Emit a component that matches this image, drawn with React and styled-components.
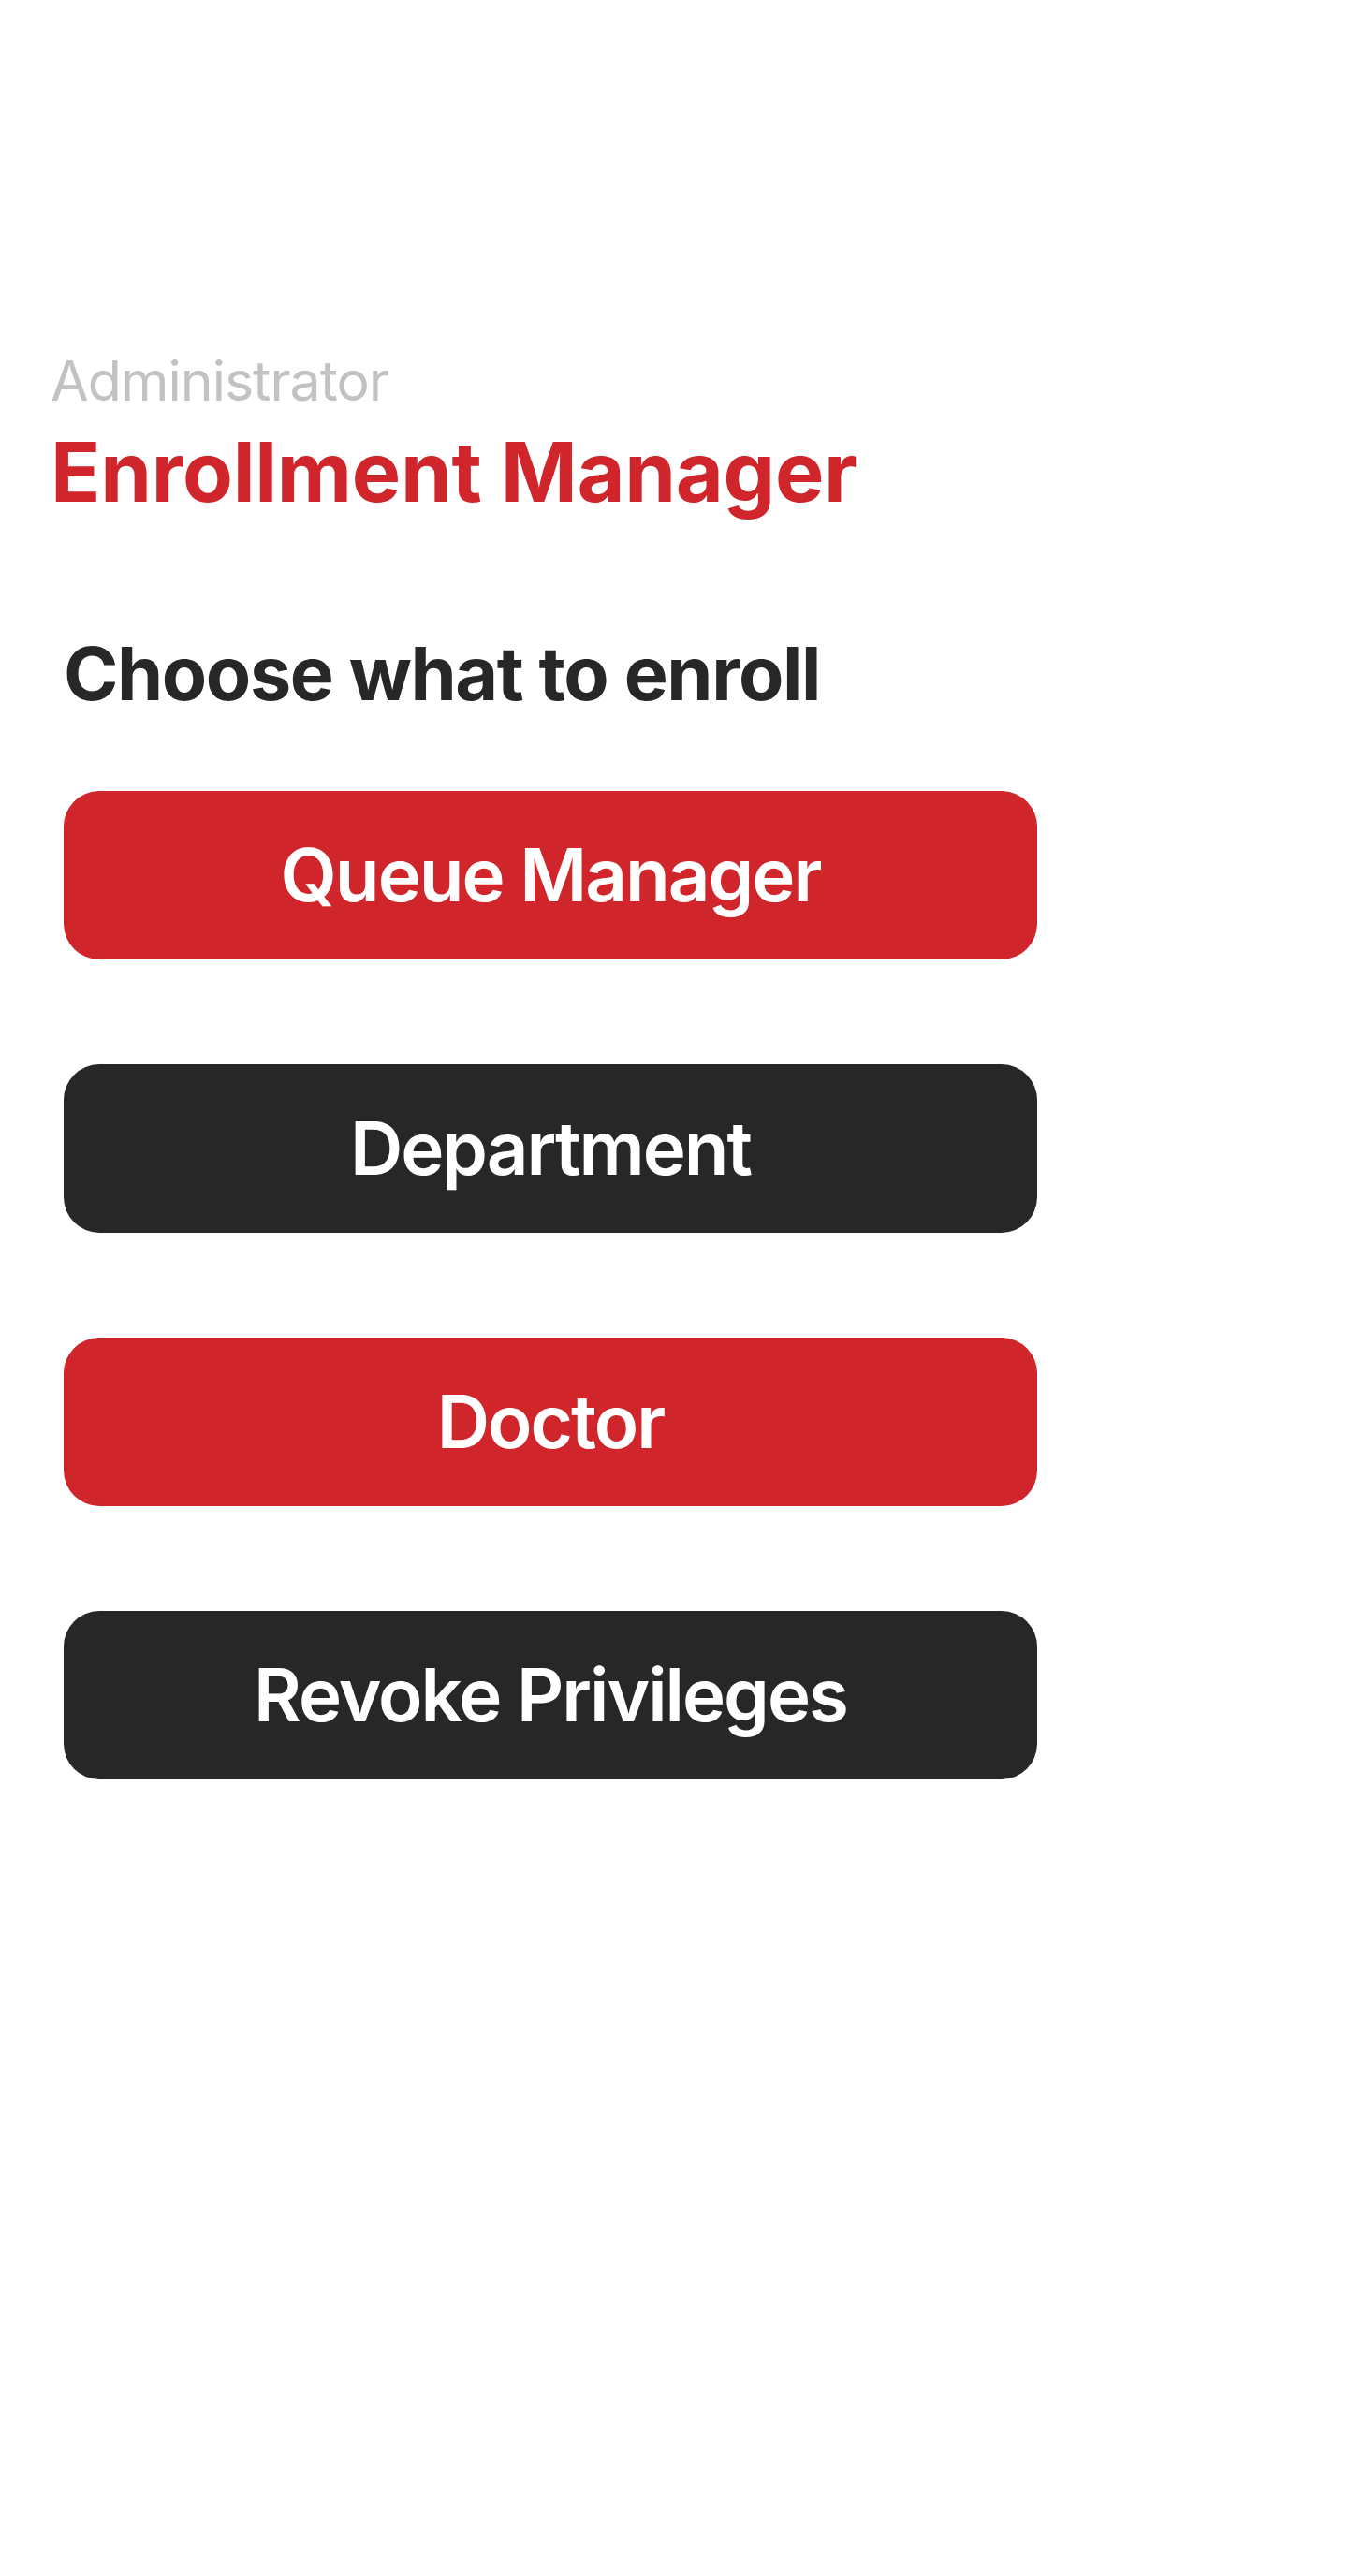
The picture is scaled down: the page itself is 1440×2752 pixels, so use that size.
import React from 'react';
import styled, { createGlobalStyle } from 'styled-components';

const GlobalStyle = createGlobalStyle`
  html, body {
    margin: 0;
    padding: 0;
    background: #ffffff;
  }
  body {
    font-family: Inter, "Liberation Sans", Arial, sans-serif;
  }
`

const Page = styled.div`
  width: 1440px;
  min-height: 2752px;
  box-sizing: border-box;
  padding-top: 377px;
  display: flex;
  flex-direction: column;
  background: #ffffff;
`

const Header = styled.header`
  display: flex;
  flex-direction: column;
  gap: 24px;
  padding-left: 54px;
`

const Role = styled.div`
  font-size: 59px;
  line-height: 1;
  font-weight: 400;
  color: #c2c2c2;
  letter-spacing: -1px;
`

const Title = styled.h1`
  margin: 0;
  font-size: 88px;
  line-height: 1;
  font-weight: 700;
  color: #d0252a;
  letter-spacing: -0.3px;
`

const Content = styled.main`
  display: flex;
  flex-direction: column;
  padding-left: 68px;
  margin-top: 132px;
`

const Prompt = styled.h2`
  margin: 0 0 86px 0;
  font-size: 79px;
  line-height: 1;
  font-weight: 700;
  color: #272727;
  letter-spacing: -1.4px;
`

const ButtonList = styled.div`
  display: flex;
  flex-direction: column;
  gap: 112px;
`

const ChoiceButton = styled.button`
  width: 1040px;
  height: 180px;
  border: 0;
  border-radius: 38px;
  background-color: ${props => props.$dark ? '#272727' : '#d0252a'};
  color: #ffffff;
  font-family: Inter, "Liberation Sans", Arial, sans-serif;
  font-size: 78px;
  font-weight: 600;
  letter-spacing: -2px;
  line-height: 1;
  display: flex;
  align-items: center;
  justify-content: center;
  padding: 0;
  cursor: pointer;
`

const choices = [
  { label: 'Queue Manager', dark: false },
  { label: 'Department', dark: true },
  { label: 'Doctor', dark: false },
  { label: 'Revoke Privileges', dark: true },
];

function App() {
  return (
    <>
      <GlobalStyle />
      <Page>
        <Header>
          <Role>Administrator</Role>
          <Title>Enrollment Manager</Title>
        </Header>
        <Content>
          <Prompt>Choose what to enroll</Prompt>
          <ButtonList>
            {choices.map((choice) => (
              <ChoiceButton key={choice.label} $dark={choice.dark}>
                {choice.label}
              </ChoiceButton>
            ))}
          </ButtonList>
        </Content>
      </Page>
    </>
  )
}

export default App;
